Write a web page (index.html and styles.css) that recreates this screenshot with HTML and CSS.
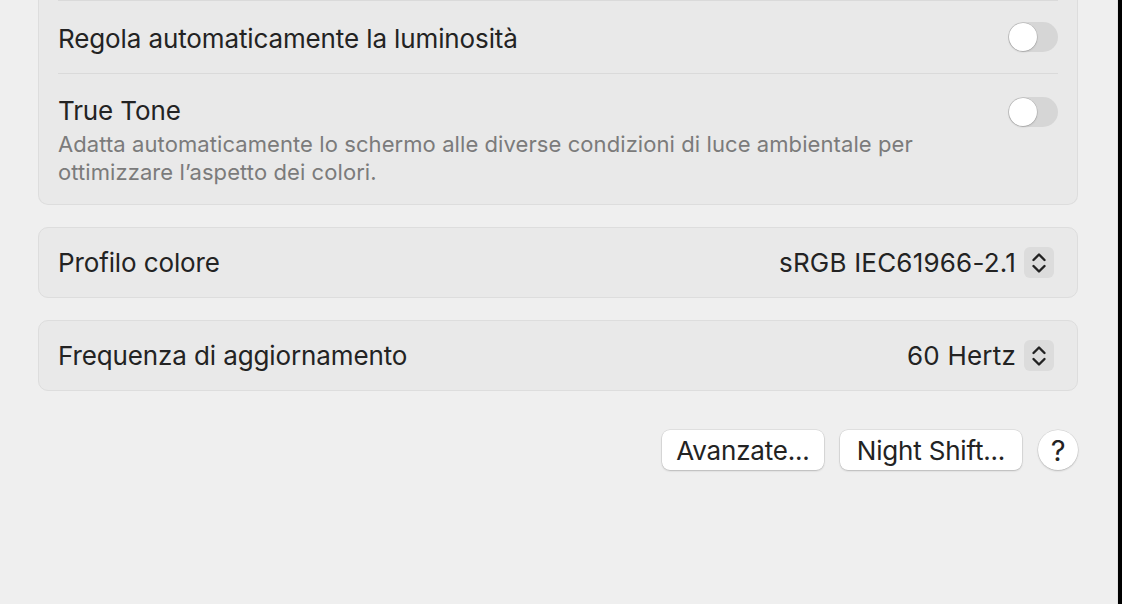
FILE: index.html
```html
<!DOCTYPE html>
<html lang="it">
<head>
    <meta charset="UTF-8">
    <meta name="viewport" content="width=device-width, initial-scale=1.0">
    <title>Monitor</title>
    <link rel="stylesheet" href="styles.css">
</head>
<body>
    <div class="window">
        <div class="content">
            <section class="group group-cut">
                <div class="row">
                    <span class="label">Regola automaticamente la luminosità</span>
                    <span class="switch"><span class="knob"></span></span>
                </div>
                <div class="row row-top">
                    <div class="text">
                        <div class="label">True Tone</div>
                        <div class="desc">Adatta automaticamente lo schermo alle diverse condizioni di luce ambientale per ottimizzare l’aspetto dei colori.</div>
                    </div>
                    <span class="switch"><span class="knob"></span></span>
                </div>
            </section>

            <section class="group">
                <div class="row">
                    <span class="label">Profilo colore</span>
                    <span class="popup">
                        <span class="value">sRGB IEC61966-2.1</span>
                        <span class="stepper">
                            <svg width="16" height="22" viewBox="0 0 16 22"><path d="M2.5 8 L8 2.5 L13.5 8 M2.5 14 L8 19.5 L13.5 14" fill="none" stroke="#222" stroke-width="2.4" stroke-linecap="round" stroke-linejoin="round"/></svg>
                        </span>
                    </span>
                </div>
            </section>

            <section class="group">
                <div class="row">
                    <span class="label">Frequenza di aggiornamento</span>
                    <span class="popup">
                        <span class="value">60 Hertz</span>
                        <span class="stepper">
                            <svg width="16" height="22" viewBox="0 0 16 22"><path d="M2.5 8 L8 2.5 L13.5 8 M2.5 14 L8 19.5 L13.5 14" fill="none" stroke="#222" stroke-width="2.4" stroke-linecap="round" stroke-linejoin="round"/></svg>
                        </span>
                    </span>
                </div>
            </section>

            <div class="actions">
                <button class="btn btn-advanced">Avanzate...</button>
                <button class="btn btn-night">Night Shift...</button>
                <button class="btn help">?</button>
            </div>
        </div>
    </div>
</body>
</html>
```

FILE: styles.css
```css
html, body {
    margin: 0;
    height: 100%;
}
body {
    background: #000;
    font-family: Inter, "Noto Sans", sans-serif;
    color: #232323;
    overflow: hidden;
}
.window {
    width: 1117px;
    height: 604px;
    background: #efefef;
    border-right: 1px solid #e2e2e2;
}
.content {
    padding: 0 39px 0 38px;
    display: flex;
    flex-direction: column;
    gap: 22px;
}
.group {
    background: #e9e9e9;
    border: 1px solid #dddddd;
    border-radius: 10px;
}
.group-cut {
    border-top: none;
    border-radius: 0 0 10px 10px;
}
.row {
    display: flex;
    align-items: center;
    justify-content: space-between;
    margin: 0 19px;
    min-height: 69px;
}
.group-cut .row {
    border-top: 1px solid #dadada;
    min-height: 72px;
}
.group-cut .row:first-child .label {
    margin-top: 3px;
}
.row-top {
    align-items: flex-start;
    padding: 21px 0 18px;
}
.row-top .switch {
    margin-top: 2px;
}
.label {
    font-size: 26px;
    line-height: 32px;
    letter-spacing: -0.12px;
}
.desc {
    margin-top: 4px;
    font-size: 22px;
    line-height: 27.5px;
    color: #7b7b7b;
    max-width: 900px;
    letter-spacing: 0.08px;
}
.switch {
    flex: none;
    width: 50px;
    height: 30px;
    border-radius: 15px;
    background: #d6d6d6;
    display: flex;
    align-items: center;
    padding: 0 1px;
    box-sizing: border-box;
}
.knob {
    width: 28px;
    height: 28px;
    border-radius: 50%;
    background: #fff;
    box-shadow: 0 0 0 0.5px rgba(0, 0, 0, 0.18), 0 1px 2px rgba(0, 0, 0, 0.15);
}
.popup {
    display: flex;
    align-items: center;
    gap: 8px;
    margin-right: 4px;
}
.value {
    font-size: 26px;
    letter-spacing: 0.2px;
}
.stepper {
    width: 30px;
    height: 31px;
    border-radius: 6px;
    background: #dcdcdc;
    display: flex;
    align-items: center;
    justify-content: center;
}
.actions {
    display: flex;
    justify-content: flex-end;
    gap: 16px;
    margin-top: 17px;
}
.btn {
    font-family: inherit;
    font-size: 26px;
    letter-spacing: -0.2px;
    color: #232323;
    height: 40px;
    padding: 0;
    background: #fff;
    border: none;
    border-radius: 8px;
    box-shadow: 0 0 0 0.5px rgba(0, 0, 0, 0.12), 0 1px 2px rgba(0, 0, 0, 0.18);
}
.btn-advanced {
    width: 162px;
}
.btn-night {
    width: 182px;
}
.help {
    width: 40px;
    border-radius: 50%;
    font-size: 29px;
    font-weight: 400;
}
```
